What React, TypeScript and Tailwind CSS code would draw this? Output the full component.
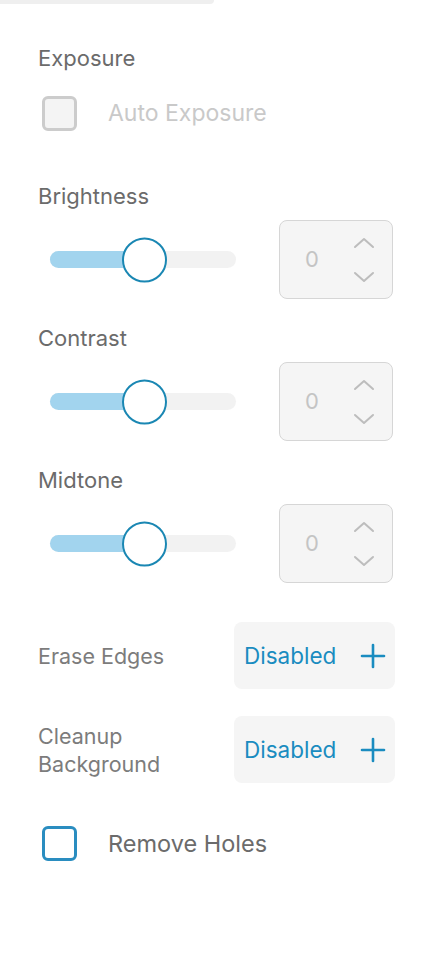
import React from "react";

const font = { fontFamily: "Inter, 'Noto Sans', sans-serif" };

function Chevrons() {
  return (
    <div className="flex flex-col items-center gap-[22px]">
      <svg width="22" height="12" viewBox="0 0 22 12" fill="none">
        <polyline points="2,10 11,2 20,10" stroke="#bdbdbd" strokeWidth="2" strokeLinecap="round" strokeLinejoin="round" />
      </svg>
      <svg width="22" height="12" viewBox="0 0 22 12" fill="none">
        <polyline points="2,2 11,10 20,2" stroke="#bdbdbd" strokeWidth="2" strokeLinecap="round" strokeLinejoin="round" />
      </svg>
    </div>
  );
}

function SliderRow() {
  return (
    <div className="mt-[10px] flex items-center">
      <div className="relative ml-[50px] h-[17px] w-[186px] rounded-full bg-[#f2f2f2]">
        <div className="absolute left-0 top-0 h-full w-[94px] rounded-full bg-[#a2d4ee]" />
        <div className="absolute left-[72px] top-1/2 h-[45px] w-[45px] -translate-y-1/2 rounded-full border-2 border-[#1a87b3] bg-white" />
      </div>
      <div className="ml-[43px] flex h-[79px] w-[114px] items-center rounded-[8px] border border-[#d6d6d6] bg-[#f5f5f5]">
        <span className="ml-[25px] text-[22px] text-[#c4c4c4]">0</span>
        <div className="ml-auto mr-[17px]">
          <Chevrons />
        </div>
      </div>
    </div>
  );
}

function Label({ children, mt }: { children: React.ReactNode; mt: string }) {
  return <div className={`${mt} pl-[38px] text-[22px] leading-[28px] text-[#6b6b6b]`}>{children}</div>;
}

function Plus() {
  return (
    <svg width="26" height="26" viewBox="0 0 26 26" fill="none">
      <line x1="13" y1="2" x2="13" y2="24" stroke="#1a8cc0" strokeWidth="2.6" strokeLinecap="round" />
      <line x1="2" y1="13" x2="24" y2="13" stroke="#1a8cc0" strokeWidth="2.6" strokeLinecap="round" />
    </svg>
  );
}

function DisabledButton() {
  return (
    <div className="flex h-[67px] w-[161px] items-center rounded-[8px] bg-[#f5f5f5] pl-[10px]">
      <span className="text-[22.5px] text-[#1a8cc0]">Disabled</span>
      <div className="ml-auto mr-[9px]">
        <Plus />
      </div>
    </div>
  );
}

export default function App() {
  return (
    <div className="min-h-[956px] w-[424px] bg-white" style={font}>
      <div className="h-[4px] w-[214px] rounded-br-[6px] bg-[#efefef]" />
      <div className="mt-[40px] pl-[38px] text-[22px] leading-[28px] text-[#6b6b6b]">Exposure</div>
      <div className="mt-[24px] flex h-[35px] items-center pl-[42px]">
        <div className="h-[35px] w-[35px] rounded-[6px] border-[3px] border-[#cccccc] bg-[#f4f4f4]" />
        <span className="ml-[31px] text-[23px] text-[#c9c9c9]">Auto Exposure</span>
      </div>
      <Label mt="mt-[51px]">Brightness</Label>
      <SliderRow />
      <Label mt="mt-[25px]">Contrast</Label>
      <SliderRow />
      <Label mt="mt-[25px]">Midtone</Label>
      <SliderRow />
      <div className="mt-[39px] flex items-center pl-[38px]">
        <div className="w-[196px] text-[21.5px] leading-[28px] text-[#7c7c7c]">Erase Edges</div>
        <DisabledButton />
      </div>
      <div className="mt-[27px] flex items-center pl-[38px]">
        <div className="w-[196px] text-[21.5px] leading-[28px] text-[#7c7c7c]">
          Cleanup
          <br />
          Background
        </div>
        <DisabledButton />
      </div>
      <div className="mt-[43px] flex h-[35px] items-center pl-[42px]">
        <div className="h-[35px] w-[35px] rounded-[6px] border-[3px] border-[#2a8dc0] bg-white" />
        <span className="ml-[31px] text-[23.5px] text-[#6b6b6b]">Remove Holes</span>
      </div>
    </div>
  );
}
